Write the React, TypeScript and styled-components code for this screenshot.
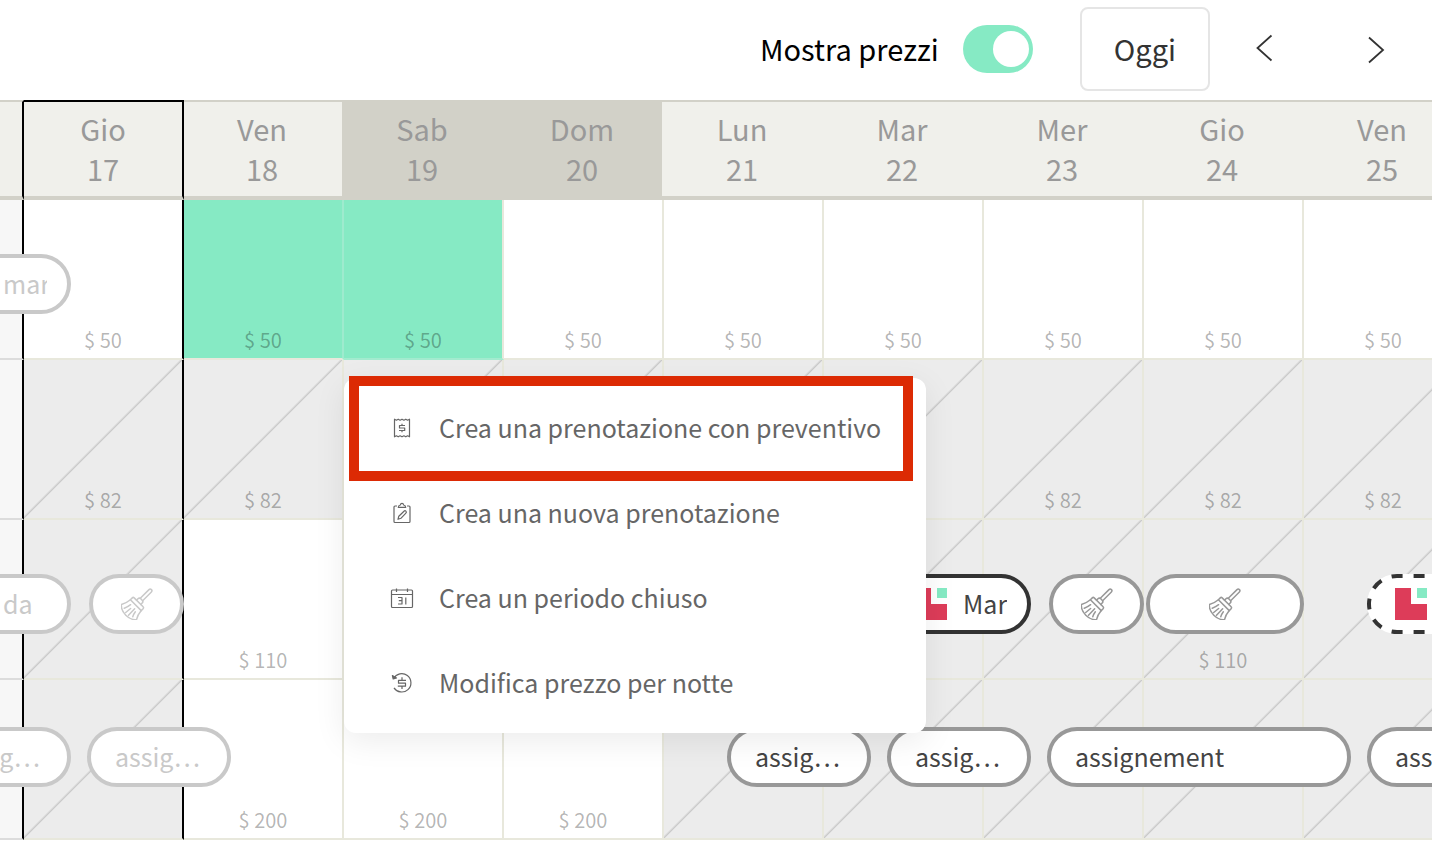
import React from 'react';
import styled, { createGlobalStyle, css } from 'styled-components';

const GlobalStyle = createGlobalStyle`
  *, *::before, *::after { box-sizing: border-box; }
  body {
    margin: 0;
    background: #fff;
    color: #000;
    font-family: 'Noto Sans CJK SC', 'Noto Sans', sans-serif;
  }
  button, input { font: inherit; color: inherit; }
`;

const Page = styled.main`
  overflow: hidden;
`;

const Toolbar = styled.header`
  display: flex;
  align-items: center;
  justify-content: flex-end;
  height: 100px;
  padding: 0 38px 2px 24px;
`;

const PriceToggle = styled.label`
  display: flex;
  align-items: center;
  gap: 24px;
  margin-right: 47px;
  font-size: 29px;
  line-height: 40px;
  cursor: pointer;
`;

const ToggleLabel = styled.span`
  padding-bottom: 2px;
`;

const Switch = styled.input`
  appearance: none;
  display: flex;
  align-items: center;
  width: 70px;
  height: 48px;
  margin: 0;
  padding: 0 4px;
  border-radius: 24px;
  background: #ccc;

  &::before {
    content: '';
    width: 36px;
    height: 36px;
    border-radius: 50%;
    background: #fff;
  }

  &:checked {
    justify-content: flex-end;
    background: #86eac4;
  }
`;

const TodayButton = styled.button`
  height: 84px;
  margin-right: 30px;
  padding: 0 32px 2px;
  border: 2px solid #e5e5e5;
  border-radius: 8px;
  background: #fff;
  color: #333;
  font-size: 29px;
  line-height: 40px;
`;

const Pager = styled.nav`
  display: flex;
  gap: 64px;
`;

const ArrowButton = styled.button`
  display: flex;
  align-items: center;
  justify-content: center;
  width: 48px;
  height: 48px;
  padding: 0;
  border: 0;
  background: none;
  color: #333;
`;

const CalendarViewport = styled.section`
  margin-right: 6px;
  overflow: hidden;
`;

const CalendarTable = styled.table`
  width: 1464px;
  table-layout: fixed;
  border-collapse: separate;
  border-spacing: 0;
`;

const EdgeCol = styled.col`
  width: 24px;
`;

const DayCol = styled.col`
  width: 160px;
`;

type HeaderEdge = 'plain' | 'weekend' | 'today';

const headerEdges: Record<HeaderEdge, ReturnType<typeof css>> = {
  plain: css`
    padding-right: 4px;
    box-shadow: inset -2px 0 0 #f0f0eb;
  `,
  weekend: css`
    padding-right: 4px;
    box-shadow: inset -2px 0 0 #d2d1c8;
  `,
  today: css`
    border-right: 2px solid #000;
  `,
};

const DayHeader = styled.th<{ $weekend?: boolean; $today?: boolean; $edge: HeaderEdge }>`
  height: 100px;
  padding: 6px 0 8px;
  border-top: 2px solid ${p => (p.$today ? '#000' : '#d2d1c8')};
  border-bottom: 4px solid #d2d1c8;
  background: ${p => (p.$weekend ? '#d2d1c8' : '#f0f0eb')};
  color: #999;
  font-size: 29px;
  font-weight: 400;
  line-height: 40px;
  vertical-align: top;
  ${p => headerEdges[p.$edge]}
`;

const DayLine = styled.span`
  display: block;
`;

const Cell = styled.td<{ $closed?: boolean; $selected?: boolean; $lastSelected?: boolean; $edge?: 'today' | 'selected' }>`
  position: relative;
  height: 160px;
  padding: 0 0 6px;
  border-right: 2px solid
    ${p => (p.$edge === 'today' ? '#000' : p.$edge === 'selected' ? '#9eebce' : '#e8e8dc')};
  border-bottom: 2px solid ${p => (p.$lastSelected ? '#a3ebcf' : '#e8e8dc')};
  background: ${p => (p.$selected ? '#86eac4' : '#fff')};
  text-align: center;
  vertical-align: bottom;
  ${p =>
    p.$closed &&
    css`
      background: linear-gradient(
          to bottom right,
          transparent calc(50% - 2px),
          #cacaca 50%,
          transparent calc(50% + 1px)
        )
        padding-box #ececec;
    `}
`;

const PastCell = styled(Cell)`
  border-bottom-color: #dcdcdc;
  background: #f7f7f7;
`;

const Price = styled.span`
  display: block;
  color: rgba(0, 0, 0, 0.3);
  font-size: 20px;
  line-height: 24px;
`;

type PillTone = 'past' | 'normal' | 'strong' | 'pending';

const pillTones: Record<PillTone, ReturnType<typeof css>> = {
  past: css`
    border: 4px solid #c9c9c9;
    color: #c9c9c9;
  `,
  normal: css`
    border: 4px solid #989898;
    color: #444;
  `,
  strong: css`
    border: 4px solid #333;
    color: #444;
  `,
  pending: css`
    border: 4px solid transparent;
    color: #444;
  `,
};

const PillBox = styled.div<{ $tone: PillTone; $left: number; $top: number; $width: number; $centered?: boolean }>`
  position: absolute;
  z-index: 1;
  left: ${p => p.$left}px;
  top: ${p => p.$top}px;
  display: flex;
  align-items: center;
  justify-content: ${p => (p.$centered ? 'center' : 'flex-start')};
  gap: 16px;
  width: ${p => p.$width}px;
  height: 60px;
  padding: ${p => (p.$centered ? '0' : '0 20px 0 24px')};
  border-radius: 30px;
  background: #fff;
  font-size: 25px;
  line-height: 36px;
  ${p => pillTones[p.$tone]}
`;

const DashedOutline = styled.svg`
  position: absolute;
  top: -4px;
  left: -4px;
`;

const PillLabel = styled.span`
  flex: 0 1 auto;
  padding-bottom: 2px;
  overflow: hidden;
  white-space: nowrap;
`;

const PillIcon = styled.svg`
  flex: none;
  display: block;
  width: 32px;
  height: 32px;
`;

const BroomSvg = styled(PillIcon)<{ $past?: boolean }>`
  color: ${p => (p.$past ? '#c9c9c9' : '#989898')};
`;

const MenuPanel = styled.div`
  position: absolute;
  z-index: 10;
  top: 178px;
  left: 0;
  width: 582px;
  padding: 8px 0 7px;
  border-radius: 12px;
  background: #fff;
  box-shadow: 0 8px 32px rgba(0, 0, 0, 0.08);
`;

const MenuList = styled.ul`
  margin: 0;
  padding: 0;
  list-style: none;
`;

const MenuButton = styled.button`
  display: flex;
  align-items: center;
  gap: 25px;
  width: 100%;
  height: 85px;
  padding: 0 0 2px 46px;
  border: 0;
  background: none;
  color: #666;
  font-size: 25px;
  line-height: 36px;
  text-align: left;
  white-space: nowrap;
`;

const MenuLabel = styled.span`
  padding-bottom: 2px;
`;

const MenuIcon = styled.svg`
  flex: none;
  width: 24px;
  height: 24px;
`;

const Highlight = styled.div`
  position: absolute;
  top: -2px;
  left: 5px;
  width: 564px;
  height: 105px;
  border: 10px solid #dc2a04;
  pointer-events: none;
`;

function Broom({ past }: { past?: boolean }) {
  return (
    <BroomSvg $past={past} viewBox="0 0 96 96" fill="none" stroke="currentColor" strokeWidth="4.5" strokeLinecap="round" strokeLinejoin="round" role="img" aria-label="Pulizia">
      <g transform="translate(48 48) rotate(45)">
        <path d="M-5 -19V-56a5 5 0 0 1 10 0V-19" />
        <path d="M-9 -7V-13a6 6 0 0 1 6 -6H3a6 6 0 0 1 6 6V-7" />
        <path d="M-19 -7H19a4 4 0 0 1 4 4V5H-23V-3a4 4 0 0 1 4 -4Z" />
        <path d="M-23 5C-24 16 -27 26 -32 34C-18 52 18 52 32 34C27 26 24 16 23 5" />
        <path d="M-12 15C-13 23 -15 30 -18 36M-4 23L-6 42M5 15L6 42M13 20C14 27 16 32 18 36" />
      </g>
    </BroomSvg>
  );
}

function ChannelLogo() {
  return (
    <PillIcon viewBox="0 0 32 32" aria-hidden="true">
      <path d="M0 0H16V16H32V32H0Z" fill="#dd3c59" />
      <path d="M22 0H32V10H22Z" fill="#86eac4" />
    </PillIcon>
  );
}

// Both halves start at the left tip, so the dashes mirror each other above and below it.
function PendingOutline({ width }: { width: number }) {
  return (
    <DashedOutline
      width={width}
      height={60}
      viewBox={`0 0 ${width} 60`}
      fill="none"
      stroke="#333"
      strokeWidth="4"
      strokeDasharray="11 11"
      strokeDashoffset="5.5"
      aria-hidden="true"
    >
      <path d={`M2 30A28 28 0 0 1 30 2H${width - 30}A28 28 0 0 1 ${width - 2} 30`} />
      <path d={`M2 30A28 28 0 0 0 30 58H${width - 30}A28 28 0 0 0 ${width - 2} 30`} />
    </DashedOutline>
  );
}

const lineProps = { fill: 'none', stroke: 'currentColor', strokeWidth: 1.2, strokeLinejoin: 'round' as const };

function ReceiptIcon() {
  return (
    <MenuIcon viewBox="0 0 24 24" {...lineProps} aria-hidden="true">
      <path d="M4.5 3.2V20.8L6.4 19.8L8.2 20.8L10.1 19.8L12 20.8L13.9 19.8L15.8 20.8L17.6 19.8L19.5 20.8V3.2L17.6 4.2L15.8 3.2L13.9 4.2L12 3.2L10.1 4.2L8.2 3.2L6.4 4.2Z" />
      <path d="M15 9.5H9.5V12H14.7V14.5H9M12 7.8V9.5M12 14.5V16.2" />
    </MenuIcon>
  );
}

function ClipboardIcon() {
  return (
    <MenuIcon viewBox="0 0 24 24" {...lineProps} aria-hidden="true">
      <path d="M7 5H5a1 1 0 0 0 -1 1V20.5a1 1 0 0 0 1 1H19a1 1 0 0 0 1 -1V6a1 1 0 0 0 -1 -1H17" />
      <path d="M8.3 6.4C8.3 4.8 9.2 4.2 10.4 4C10.5 2.9 11.1 2.3 12 2.3S13.5 2.9 13.6 4C14.8 4.2 15.7 4.8 15.7 6.4Z" />
      <path d="M8 18.3L8.8 15.2L14 10.2A1.2 1.2 0 0 1 15.9 12.1L10.9 17.3Z" />
    </MenuIcon>
  );
}

function CalendarIcon() {
  return (
    <MenuIcon viewBox="0 0 24 24" {...lineProps} aria-hidden="true">
      <rect x="1.5" y="4" width="21" height="17.5" rx="1" />
      <path d="M1.5 8.5H22.5M6.5 2.5V6M17.5 2.5V6" />
      <path d="M8 11.5H12V18H8M8.8 14.7H12M15.8 11.5V18.4" />
    </MenuIcon>
  );
}

function PriceHistoryIcon() {
  return (
    <MenuIcon viewBox="0 0 24 24" {...lineProps} aria-hidden="true">
      <path d="M3.6 7.5A9.2 9.2 0 1 1 4 16.8" />
      <path d="M2.4 4.6L3.2 8L6.5 6.9Z" fill="currentColor" />
      <path d="M16 9.3H8.5V12.2H15.5V15.2H7.8M12 6.3V9.3M12 15.2V18" />
    </MenuIcon>
  );
}

const menuItems = [
  { label: 'Crea una prenotazione con preventivo', Icon: ReceiptIcon },
  { label: 'Crea una nuova prenotazione', Icon: ClipboardIcon },
  { label: 'Crea un periodo chiuso', Icon: CalendarIcon },
  { label: 'Modifica prezzo per notte', Icon: PriceHistoryIcon },
];

function ContextMenu() {
  return (
    <MenuPanel>
      <MenuList>
        {menuItems.map(({ label, Icon }) => (
          <li key={label}>
            <MenuButton type="button">
              <Icon />
              <MenuLabel>{label}</MenuLabel>
            </MenuButton>
          </li>
        ))}
      </MenuList>
      <Highlight />
    </MenuPanel>
  );
}

interface Day {
  name: string;
  date: number;
  weekend?: boolean;
}

const days: Day[] = [
  { name: 'Gio', date: 17 },
  { name: 'Ven', date: 18 },
  { name: 'Sab', date: 19, weekend: true },
  { name: 'Dom', date: 20, weekend: true },
  { name: 'Lun', date: 21 },
  { name: 'Mar', date: 22 },
  { name: 'Mer', date: 23 },
  { name: 'Gio', date: 24 },
  { name: 'Ven', date: 25 },
];

const TODAY = 17;

interface Pill {
  date: number;
  left: number;
  width: number;
  tone: PillTone;
  label?: string;
  kind?: 'cleaning' | 'channel';
}

interface Room {
  id: string;
  pillTop: number;
  prices: Record<number, string>;
  closed: number[];
  selected?: number[];
  menuAt?: number;
  pills: Pill[];
}

const everyDay = days.map(d => d.date);

const rooms: Room[] = [
  {
    id: 'room-1',
    pillTop: 54,
    prices: Object.fromEntries(everyDay.map(d => [d, '$ 50'])),
    closed: [],
    selected: [18, 19],
    menuAt: 19,
    pills: [{ date: 16, left: -73, width: 144, tone: 'past', kind: 'channel', label: 'mar' }],
  },
  {
    id: 'room-2',
    pillTop: 54,
    prices: { 17: '$ 82', 18: '$ 82', 23: '$ 82', 24: '$ 82', 25: '$ 82' },
    closed: everyDay,
    pills: [],
  },
  {
    id: 'room-3',
    pillTop: 54,
    prices: { 18: '$ 110', 24: '$ 110' },
    closed: [17, 21, 22, 23, 24, 25],
    pills: [
      { date: 16, left: -73, width: 144, tone: 'past', kind: 'channel', label: 'da' },
      { date: 17, left: 65, width: 95, tone: 'past', kind: 'cleaning' },
      { date: 22, left: 63, width: 144, tone: 'strong', kind: 'channel', label: 'Mar' },
      { date: 23, left: 65, width: 95, tone: 'normal', kind: 'cleaning' },
      { date: 24, left: 2, width: 158, tone: 'normal', kind: 'cleaning' },
      { date: 25, left: 63, width: 144, tone: 'pending', kind: 'channel' },
    ],
  },
  {
    id: 'room-4',
    pillTop: 47,
    prices: { 18: '$ 200', 19: '$ 200', 20: '$ 200' },
    closed: [17, 21, 22, 23, 24, 25],
    pills: [
      { date: 16, left: -73, width: 144, tone: 'past', label: 'assig…' },
      { date: 17, left: 63, width: 144, tone: 'past', label: 'assig…' },
      { date: 21, left: 63, width: 144, tone: 'normal', label: 'assig…' },
      { date: 22, left: 63, width: 144, tone: 'normal', label: 'assig…' },
      { date: 23, left: 63, width: 304, tone: 'normal', label: 'assignement' },
      { date: 25, left: 63, width: 144, tone: 'normal', label: 'assig…' },
    ],
  },
];

function Pills({ room, date }: { room: Room; date: number }) {
  return (
    <>
      {room.pills
        .filter(pill => pill.date === date)
        .map(pill => (
          <PillBox
            key={pill.left}
            $tone={pill.tone}
            $left={pill.left}
            $top={room.pillTop}
            $width={pill.width}
            $centered={pill.kind === 'cleaning'}
          >
            {pill.tone === 'pending' && <PendingOutline width={pill.width} />}
            {pill.kind === 'cleaning' && <Broom past={pill.tone === 'past'} />}
            {pill.kind === 'channel' && <ChannelLogo />}
            {pill.label && <PillLabel>{pill.label}</PillLabel>}
          </PillBox>
        ))}
    </>
  );
}

function headerEdge(index: number): HeaderEdge {
  if (days[index].date === TODAY) return 'today';
  return days[index + 1]?.weekend ? 'weekend' : 'plain';
}

function RoomRow({ room }: { room: Room }) {
  const isSelected = (date: number) => room.selected?.includes(date) ?? false;
  return (
    <tr>
      <PastCell $edge="today">
        <Pills room={room} date={16} />
      </PastCell>
      {days.map(({ date }) => (
        <Cell
          key={date}
          $closed={room.closed.includes(date)}
          $selected={isSelected(date)}
          $lastSelected={isSelected(date) && !isSelected(date + 1)}
          $edge={date === TODAY ? 'today' : isSelected(date) && isSelected(date + 1) ? 'selected' : undefined}
        >
          {room.prices[date] && <Price>{room.prices[date]}</Price>}
          <Pills room={room} date={date} />
          {room.menuAt === date && <ContextMenu />}
        </Cell>
      ))}
    </tr>
  );
}

export default function App() {
  return (
    <Page>
      <GlobalStyle />
      <Toolbar>
        <PriceToggle>
          <ToggleLabel>Mostra prezzi</ToggleLabel>
          <Switch type="checkbox" role="switch" defaultChecked />
        </PriceToggle>
        <TodayButton type="button">Oggi</TodayButton>
        <Pager aria-label="Periodo">
          <ArrowButton type="button" aria-label="Precedente">
            <svg width="24" height="32" viewBox="0 0 24 32" fill="none" stroke="currentColor" strokeWidth="1.8">
              <path d="M19.5 2.5L5.5 15L19.5 27.5" />
            </svg>
          </ArrowButton>
          <ArrowButton type="button" aria-label="Successivo">
            <svg width="24" height="32" viewBox="0 0 24 32" fill="none" stroke="currentColor" strokeWidth="1.8">
              <path d="M5 4.5L19 17L5 29.5" />
            </svg>
          </ArrowButton>
        </Pager>
      </Toolbar>
      <CalendarViewport>
        <CalendarTable>
          <colgroup>
            <EdgeCol />
            {days.map(day => (
              <DayCol key={day.date} />
            ))}
          </colgroup>
          <thead>
            <tr>
              <DayHeader as="td" $edge="today" />
              {days.map((day, i) => (
                <DayHeader key={day.date} scope="col" $weekend={day.weekend} $today={day.date === TODAY} $edge={headerEdge(i)}>
                  <DayLine>{day.name}</DayLine>
                  <DayLine>{day.date}</DayLine>
                </DayHeader>
              ))}
            </tr>
          </thead>
          <tbody>
            {rooms.map(room => (
              <RoomRow key={room.id} room={room} />
            ))}
          </tbody>
        </CalendarTable>
      </CalendarViewport>
    </Page>
  );
}
